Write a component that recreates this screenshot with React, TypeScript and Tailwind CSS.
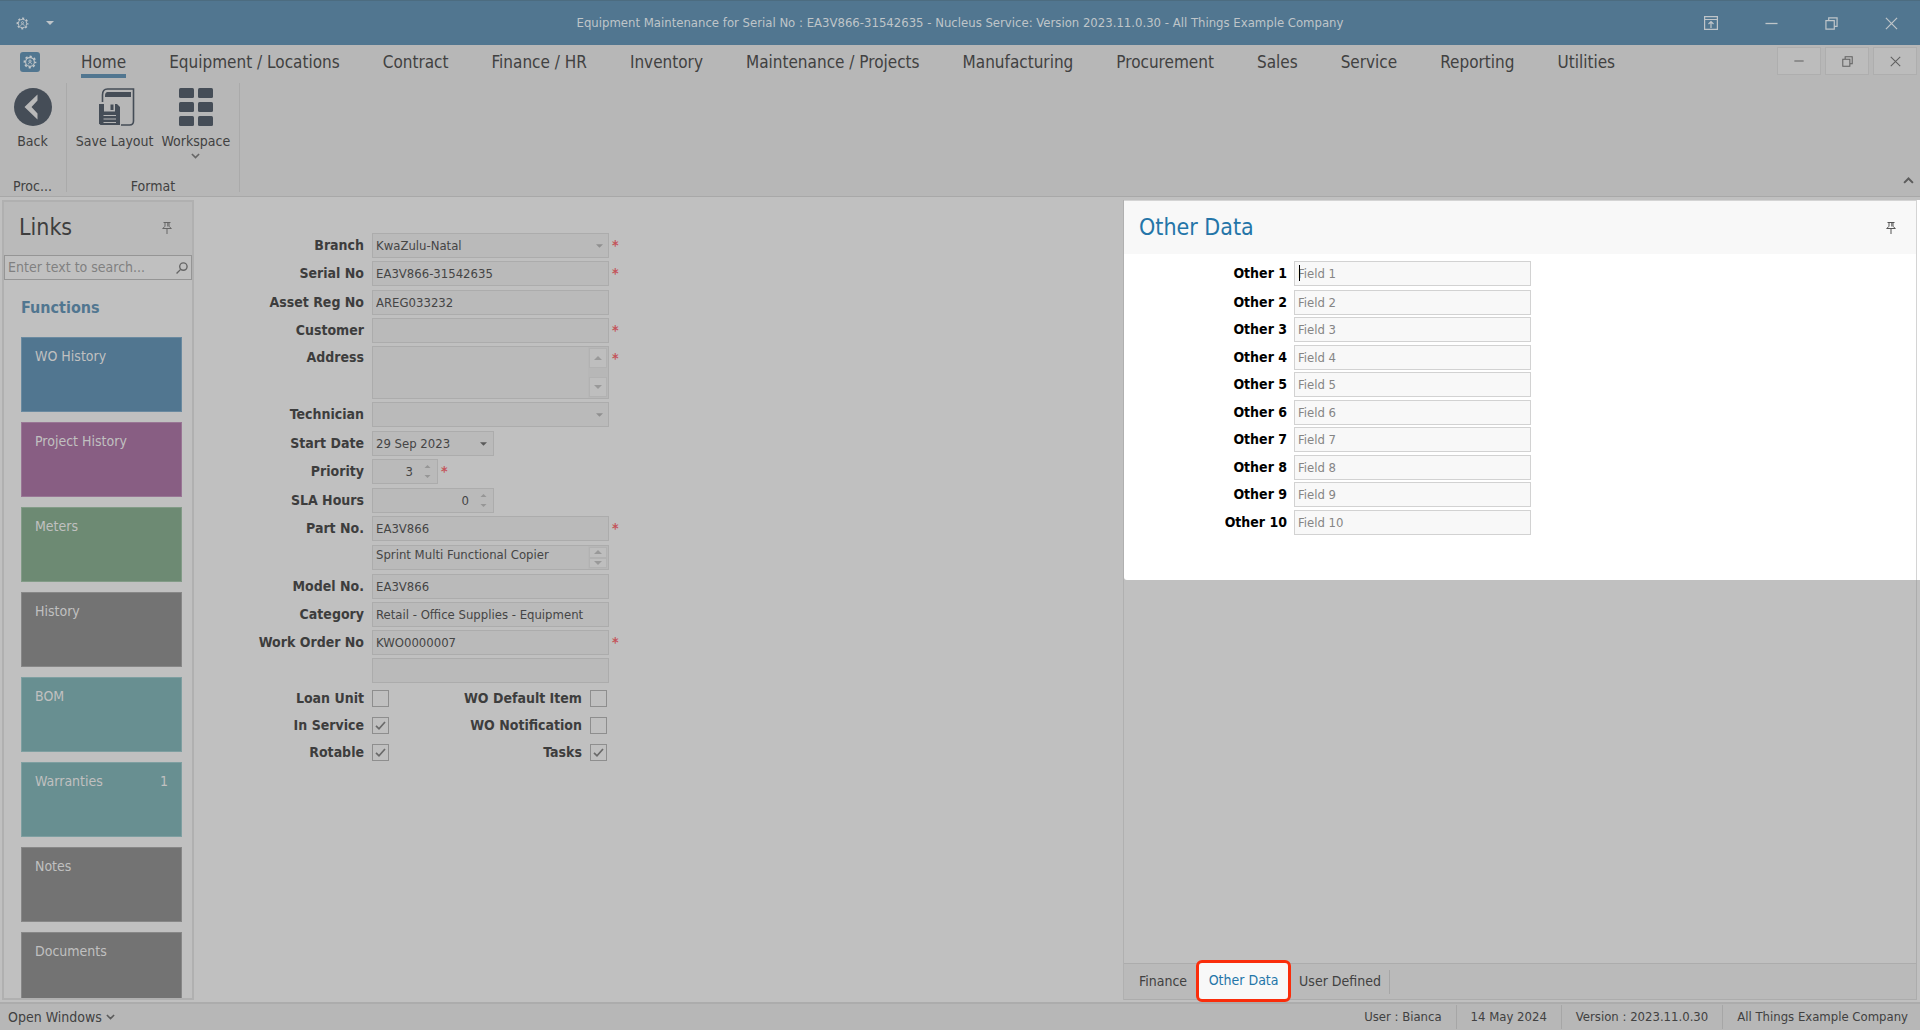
import { useState } from "react";
import type { ReactNode } from "react";

const menu = [
  "Home",
  "Equipment / Locations",
  "Contract",
  "Finance / HR",
  "Inventory",
  "Maintenance / Projects",
  "Manufacturing",
  "Procurement",
  "Sales",
  "Service",
  "Reporting",
  "Utilities",
];

const tiles = [
  { name: "WO History", color: "bg-[#517690]" },
  { name: "Project History", color: "bg-[#885e83]" },
  { name: "Meters", color: "bg-[#6d8a73]" },
  { name: "History", color: "bg-[#737373]" },
  { name: "BOM", color: "bg-[#688f91]" },
  { name: "Warranties", color: "bg-[#688f91]", count: 1 },
  { name: "Notes", color: "bg-[#737373]" },
  { name: "Documents", color: "bg-[#737373]" },
];

const otherFields = [[1], [2, 3], [4, 5], [6, 7], [8, 9], [10]];

const box = "h-[25px] border border-[#acacac] bg-[#bababa] text-[#454545] outline-none";

function Gear({ className }: { className?: string }) {
  return (
    <svg viewBox="0 0 16 16" fill="none" stroke="currentColor" className={className}>
      <circle cx="8" cy="8" r="6.4" strokeWidth="1.8" strokeDasharray="2.6 2.43" strokeDashoffset="1.3" />
      <circle cx="8" cy="8" r="5" strokeWidth="1.2" />
      <circle cx="8" cy="7" r="1.3" strokeWidth="1" />
      <path d="M5.8 10.8c.2-1.4 1-2 2.2-2s2 .6 2.2 2" strokeWidth="1" />
    </svg>
  );
}

function Pin({ className }: { className?: string }) {
  return (
    <svg viewBox="0 0 10 12" fill="none" stroke="currentColor" className={className}>
      <path d="M1.5 .5h7M3 .5v4M7 .5v4M5.8 .5v4M2.5 4.5L1 6.5M7.5 4.5L9 6.5M.5 6.5h9M5 7v5" />
    </svg>
  );
}

function Chevron({ className }: { className?: string }) {
  return (
    <svg viewBox="0 0 10 6" fill="none" stroke="currentColor" strokeWidth="1.8" className={className}>
      <path d="M1 .8l4 4 4-4" />
    </svg>
  );
}

function Caret({ className }: { className?: string }) {
  return (
    <svg viewBox="0 0 8 4" fill="currentColor" className={className}>
      <path d="M0 0h8L4 4z" />
    </svg>
  );
}

function Minimize({ className }: { className?: string }) {
  return (
    <svg viewBox="0 0 14 14" stroke="currentColor" className={className}>
      <path d="M.5 7h13" strokeWidth="1.4" />
    </svg>
  );
}

function Restore({ className }: { className?: string }) {
  return (
    <svg viewBox="0 0 14 14" fill="none" stroke="currentColor" strokeWidth="1.3" className={className}>
      <path d="M1 4h9v9H1zM4 4V1h9v9h-3" />
    </svg>
  );
}

function Close({ className }: { className?: string }) {
  return (
    <svg viewBox="0 0 14 14" stroke="currentColor" strokeWidth="1.3" className={className}>
      <path d="M1 1l12 12M13 1L1 13" />
    </svg>
  );
}

function TitleBar() {
  return (
    <header className="flex h-[45px] shrink-0 items-center border-t border-[#4c6c80] bg-[#517690] text-[#bfc5c9]">
      <div className="flex w-60 items-center gap-[17px] pl-4">
        <Gear className="size-[13px]" />
        <button aria-label="Quick access"><Caret className="h-1 w-2" /></button>
      </div>
      <h1 className="flex-1 text-center text-[13px]">
        Equipment Maintenance for Serial No : EA3V866-31542635 - Nucleus Service: Version 2023.11.0.30 - All Things Example Company
      </h1>
      <div className="flex w-60 items-center justify-between pr-[22px] pl-6">
        <button aria-label="Ribbon options">
          <svg viewBox="0 0 14 14" fill="none" stroke="currentColor" strokeWidth="1.2" className="size-[14px]">
            <path d="M.6 .6h12.8v12.8H.6zM.6 3.5h12.8M7 12V6M4.5 8L7 5.5 9.5 8" />
          </svg>
        </button>
        <button aria-label="Minimize"><Minimize className="size-[13px]" /></button>
        <button aria-label="Restore"><Restore className="size-[13px]" /></button>
        <button aria-label="Close"><Close className="size-[13px]" /></button>
      </div>
    </header>
  );
}

function RibbonButton({ icon, label, drop }: { icon: ReactNode; label: string; drop?: boolean }) {
  return (
    <button className="flex flex-col items-center">
      <span className="flex h-[38px] items-center">{icon}</span>
      <span className="mt-[5px] leading-5">{label}</span>
      {drop && <Chevron className="mt-0.5 h-[6px] w-[9px] text-[#666]" />}
    </button>
  );
}

function Ribbon() {
  return (
    <div className="shrink-0 border-b border-[#a8a8a8] bg-[#b7b7b7]">
      <div className="flex h-[38px] items-start pr-[3px]">
        <button aria-label="Application menu" className="mt-[7px] ml-5 flex size-5 items-center justify-center rounded-[3px] bg-[#517690] text-[#c4c8ca]">
          <Gear className="size-[14px]" />
        </button>
        <nav className="ml-[41px] flex flex-1 gap-[43px] pt-[5px] text-[17px] leading-6">
          {menu.map((m, i) => (
            <a key={m} href="#" className={i === 0 ? "border-b-4 border-[#517690]" : "border-b-4 border-transparent"}>
              {m}
            </a>
          ))}
        </nav>
        <div className="flex gap-1 pt-0.5 text-[#5f5f5f]">
          <button aria-label="Minimize document" className="flex h-7 w-[44px] items-center justify-center border border-[#aeaeae] bg-[#bcbcbc]"><Minimize className="size-[10px]" /></button>
          <button aria-label="Restore document" className="flex h-7 w-[44px] items-center justify-center border border-[#aeaeae] bg-[#bcbcbc]"><Restore className="size-[11px]" /></button>
          <button aria-label="Close document" className="flex h-7 w-[44px] items-center justify-center border border-[#aeaeae] bg-[#bcbcbc]"><Close className="size-[11px]" /></button>
        </div>
      </div>
      <div className="flex h-[113px] pb-1 text-[14px]">
        <div className="flex w-[67px] flex-col items-center justify-between border-r border-[#aaa] pt-[5px] pr-px">
          <RibbonButton
            label="Back"
            icon={
              <svg viewBox="0 0 38 38" className="size-[38px]">
                <circle cx="19" cy="19" r="19" fill="#454d57" />
                <path d="M23.5 6.5v6L17.5 19l6 6.500v6L10.500 19z" fill="#b9b9b9" />
              </svg>
            }
          />
          <span className="leading-3">Proc...</span>
        </div>
        <div className="flex w-[173px] flex-col items-center justify-between border-r border-[#aaa] pt-[5px]">
          <div className="flex gap-2">
            <RibbonButton
              label="Save Layout"
              icon={
                <svg viewBox="0 0 36 38" className="ml-1 h-[38px] w-9" fill="none" stroke="#454d57">
                  <path d="M3.500 14V7c0-4 2-6 5-6h26v32c0 3-1.500 4-4 4H22" strokeWidth="1.600" />
                  <path d="M6 8.500C6 5 7 4 9 4h23v5H6z" fill="#454d57" stroke="none" />
                  <path d="M0 16h18l3 3v18H1.500L0 35.500z" fill="#454d57" stroke="none" />
                  <path d="M5 15h11v8.500H5z" fill="#b7b7b7" stroke="none" />
                  <path d="M11.500 16.500h3v5.500h-3z" fill="#454d57" stroke="none" />
                  <path d="M4.500 27.500h12.500M4.500 31h12.500M4.500 34.500h12.500" stroke="#b7b7b7" strokeWidth="1.200" />
                </svg>
              }
            />
            <RibbonButton
              label="Workspace"
              drop
              icon={
                <svg viewBox="0 0 34 38" className="h-[38px] w-[34px]" fill="#454d57">
                  {[0, 14, 28].map((y) => (
                    <g key={y}>
                      <rect x="0" y={y} width="15" height="10" rx="1.500" />
                      <rect x="19" y={y} width="15" height="10" rx="1.500" />
                    </g>
                  ))}
                </svg>
              }
            />
          </div>
          <span className="leading-3">Format</span>
        </div>
        <button aria-label="Collapse ribbon" className="mt-auto mr-[6px] mb-2 ml-auto">
          <Chevron className="h-[7px] w-[11px] rotate-180 text-[#5c5c5c]" />
        </button>
      </div>
    </div>
  );
}

function Links() {
  return (
    <aside className="flex w-[192px] shrink-0 flex-col overflow-hidden border-2 border-[#b0b0b0]">
      <div className="flex h-[53px] shrink-0 items-center justify-between bg-[#bababa] pr-5 pb-0.5 pl-[15px]">
        <h2 className="text-[23px] text-[#3e3e3e]">Links</h2>
        <button aria-label="Pin links"><Pin className="h-3 w-[10px] text-[#666]" /></button>
      </div>
      <div className="flex h-[25px] shrink-0 items-center border border-[#959595] px-[3px]">
        <input aria-label="Search links" placeholder="Enter text to search..." className="min-w-0 flex-1 text-[14px] outline-none placeholder:text-[#808080]" />
        <svg viewBox="0 0 13 13" fill="none" stroke="#666" strokeWidth="1.5" className="size-3 shrink-0">
          <circle cx="8" cy="5" r="4" />
          <path d="M5 8L.6 12.400" />
        </svg>
      </div>
      <div className="min-h-0 flex-1 overflow-hidden pr-[10px] pl-[17px]">
        <h3 className="mt-[18px] text-[16px] leading-5 font-bold text-[#517690]">Functions</h3>
        <div className="mt-[19px] flex flex-col gap-[10px]">
          {tiles.map((t) => (
            <button key={t.name} className={`${t.color} flex h-[75px] shrink-0 items-start justify-between border border-white/15 px-[13px] pt-2 text-[14px] leading-5 text-[#c0c0c0]`}>
              <span>{t.name}</span>
              {t.count && <span>{t.count}</span>}
            </button>
          ))}
        </div>
      </div>
    </aside>
  );
}

function Row({ label, id, required, tall, children }: { label?: string; id: string; required?: boolean; tall?: boolean; children: ReactNode }) {
  return (
    <div className="flex items-start">
      <label htmlFor={id} className={`w-[170px] shrink-0 text-right text-[14px] font-bold ${tall ? "leading-[23px]" : "leading-[25px]"}`}>
        {label}
      </label>
      <div className="ml-2 flex">{children}</div>
      {required && <span className="ml-[3px] text-[14px] leading-6 font-bold text-[#c4545a]">*</span>}
    </div>
  );
}

function TextField({ label, id, value, required }: { label?: string; id: string; value?: string; required?: boolean }) {
  return (
    <Row label={label} id={id} required={required}>
      <input id={id} aria-label={label ?? "Work order description"} defaultValue={value} className={`${box} w-[237px] px-[3px]`} />
    </Row>
  );
}

function SelectField({ label, id, value, required }: { label: string; id: string; value?: string; required?: boolean }) {
  return (
    <Row label={label} id={id} required={required}>
      <div className="relative">
        <select id={id} className={`${box} w-[237px] appearance-none px-[3px]`}>
          <option>{value}</option>
        </select>
        <Caret className="pointer-events-none absolute top-[11px] right-[6px] h-1 w-[7px] text-[#8f8f8f]" />
      </div>
    </Row>
  );
}

function SpinField({ label, id, value, required, wide }: { label: string; id: string; value: string; required?: boolean; wide?: boolean }) {
  return (
    <Row label={label} id={id} required={required}>
      <div className={`${box} flex items-center pr-[6px] ${wide ? "w-[122px]" : "w-[66px]"}`}>
        <input id={id} inputMode="numeric" defaultValue={value} className="min-w-0 flex-1 text-right outline-none" />
        <div className="ml-[11px] flex flex-col gap-[7px] text-[#969696]">
          <button aria-label={`Increase ${label}`}><Caret className="h-[3px] w-[7px] rotate-180" /></button>
          <button aria-label={`Decrease ${label}`}><Caret className="h-[3px] w-[7px]" /></button>
        </div>
      </div>
    </Row>
  );
}

function MemoField({ label, id, value, required, tall }: { label?: string; id: string; value?: string; required?: boolean; tall?: boolean }) {
  const arrow = tall ? "h-5" : "h-[11px]";
  return (
    <Row label={label} id={id} required={required} tall>
      <div className={`flex w-[237px] border border-[#acacac] bg-[#bababa] ${tall ? "h-[53px]" : "h-[25px]"}`}>
        <textarea id={id} aria-label={label ?? "Part description"} defaultValue={value} className="min-w-0 flex-1 resize-none overflow-hidden px-[3px] leading-[18px] text-[#454545] outline-none" />
        <div className="flex w-5 flex-col justify-between bg-[#b7b7b7] p-px text-[#999]">
          <button aria-label="Scroll up" className={`${arrow} flex items-center justify-center border border-[#b2b2b2] bg-[#bebebe]`}><Caret className="h-1 w-2 rotate-180" /></button>
          <button aria-label="Scroll down" className={`${arrow} flex items-center justify-center border border-[#b2b2b2] bg-[#bebebe]`}><Caret className="h-1 w-2" /></button>
        </div>
      </div>
    </Row>
  );
}

function Check({ label, id, on, width }: { label: string; id: string; on?: boolean; width: string }) {
  return (
    <div className="flex h-[25px] items-center">
      <label htmlFor={id} className={`${width} text-right text-[14px] font-bold`}>{label}</label>
      <span className="relative ml-2 flex">
        <input id={id} type="checkbox" defaultChecked={on} className="peer size-[17px] appearance-none border border-[#8e8e8e]" />
        <svg viewBox="0 0 17 17" fill="none" stroke="#6a6a6a" strokeWidth="1.7" className="pointer-events-none absolute inset-0 hidden size-[17px] peer-checked:block">
          <path d="M4 8.800l3 3L13 5" />
        </svg>
      </span>
    </div>
  );
}

function EquipmentForm() {
  return (
    <form className="flex min-w-0 flex-1 flex-col gap-1 pt-[33px] text-[13px] text-[#3d3d3d]">
      <div className="flex flex-col gap-[3px]">
        <SelectField label="Branch" id="branch" value="KwaZulu-Natal" required />
        <TextField label="Serial No" id="serial" value="EA3V866-31542635" required />
      </div>
      <div className="flex flex-col gap-[3px]">
        <TextField label="Asset Reg No" id="asset" value="AREG033232" />
        <TextField label="Customer" id="customer" required />
        <MemoField label="Address" id="address" tall required />
        <SelectField label="Technician" id="technician" />
      </div>
      <div className="flex flex-col gap-[3px]">
        <Row label="Start Date" id="start">
          <div className={`${box} flex w-[122px] items-center pr-[6px] pl-[3px]`}>
            <input id="start" defaultValue="29 Sep 2023" className="min-w-0 flex-1 outline-none" />
            <button aria-label="Open calendar"><Caret className="h-1 w-[7px] text-[#5a5a5a]" /></button>
          </div>
        </Row>
        <SpinField label="Priority" id="priority" value="3" required />
      </div>
      <div className="flex flex-col gap-[3px]">
        <SpinField label="SLA Hours" id="sla" value="0" wide />
        <TextField label="Part No." id="part" value="EA3V866" required />
      </div>
      <MemoField id="partdesc" value="Sprint Multi Functional Copier" />
      <div className="flex flex-col gap-[3px]">
        <TextField label="Model No." id="model" value="EA3V866" />
        <TextField label="Category" id="category" value="Retail - Office Supplies - Equipment" />
        <TextField label="Work Order No" id="wo" value="KWO0000007" required />
        <TextField id="wodesc" />
        <div className="flex">
          <div className="flex flex-col gap-0.5">
            <Check label="Loan Unit" id="loan" width="w-[170px]" />
            <Check label="In Service" id="inservice" width="w-[170px]" on />
            <Check label="Rotable" id="rotable" width="w-[170px]" on />
          </div>
          <div className="flex flex-col gap-0.5">
            <Check label="WO Default Item" id="wodefault" width="w-[193px]" />
            <Check label="WO Notification" id="wonotify" width="w-[193px]" />
            <Check label="Tasks" id="tasks" width="w-[193px]" on />
          </div>
        </div>
      </div>
    </form>
  );
}

function OtherData() {
  return (
    <section className="h-[380px] rounded-tl-[3px] rounded-bl-[3px] bg-white">
      <div className="mr-[3px] h-full border-t border-r border-[#d4d4d4]">
        <div className="flex h-[53px] items-center justify-between bg-[#f8f8f8] pr-5 pl-[15px]">
          <h2 className="text-[23px] text-[#2475a8]">Other Data</h2>
          <button aria-label="Pin other data"><Pin className="h-3 w-[10px] text-[#555]" /></button>
        </div>
        <div className="flex flex-col gap-[3px] pt-[7px]">
          {otherFields.map((group) => (
            <div key={group[0]} className="flex flex-col gap-0.5 first:mb-px">
              {group.map((n) => (
                <div key={n} className="flex items-center">
                  <label htmlFor={`other${n}`} className="w-[163px] text-right text-[14px] font-bold text-black">Other {n}</label>
                  <div className="relative ml-[7px] flex">
                    <input id={`other${n}`} placeholder={`Field ${n}`} className="h-[25px] w-[237px] border border-[#d2d2d2] bg-[#f8f8f8] px-[3px] text-[13px] outline-none placeholder:text-[#858585]" />
                    {n === 1 && <span className="absolute top-1 left-[5px] h-4 w-px bg-black" />}
                  </div>
                </div>
              ))}
            </div>
          ))}
        </div>
      </div>
    </section>
  );
}

function DetailPanel() {
  const [tab, setTab] = useState("Other Data");
  return (
    <aside className="flex w-[797px] shrink-0 flex-col border-l border-[#b0b0b0]">
      <OtherData />
      <div className="mr-[3px] flex-1 border-r border-[#acacac]" />
      <div className="mr-[3px] flex h-[37px] items-center border border-l-0 border-[#acacac] bg-[#bababa] text-[14px]">
        {["Finance", "Other Data", "User Defined"].map((t) =>
          t === tab ? (
            <button key={t} onClick={() => setTab(t)} className="-mt-1 -mb-0.5 h-[42px] w-[95px] rounded-[6px] border-3 border-[#fa2d0b] bg-[#f8f8f8] text-[#2475a8]">
              {t}
            </button>
          ) : (
            <button key={t} onClick={() => setTab(t)} className={t === "Finance" ? "pr-[9px] pl-[15px]" : "px-2"}>
              {t}
            </button>
          )
        )}
        <span className="h-6 w-px bg-[#a6a6a6]" />
      </div>
    </aside>
  );
}

function StatusBar() {
  return (
    <footer className="flex h-7 shrink-0 items-center border-t-2 border-[#acacac] bg-[#b7b7b7] pl-2 text-[14px]">
      <button className="flex items-center gap-1">
        Open Windows <Chevron className="h-[6px] w-[9px] text-[#5c5c5c]" />
      </button>
      <div className="ml-auto flex h-6 items-center divide-x divide-[#a6a6a6] text-[13px] leading-6">
        <span className="px-[14px]">User : Bianca</span>
        <span className="px-[14px]">14 May 2024</span>
        <span className="px-[14px]">Version : 2023.11.0.30</span>
        <span className="pr-3 pl-[14px]">All Things Example Company</span>
      </div>
    </footer>
  );
}

export default function App() {
  return (
    <div className="h-screen bg-white pr-3 font-['DejaVu_Sans_Condensed','DejaVu_Sans',sans-serif] text-[#414141]">
      <div className="flex h-full flex-col bg-[#c0c0c0]">
        <TitleBar />
        <Ribbon />
        <main className="flex min-h-0 flex-1 pt-[3px] pb-[2px] pl-[2px]">
          <Links />
          <EquipmentForm />
          <DetailPanel />
        </main>
        <StatusBar />
      </div>
    </div>
  );
}
